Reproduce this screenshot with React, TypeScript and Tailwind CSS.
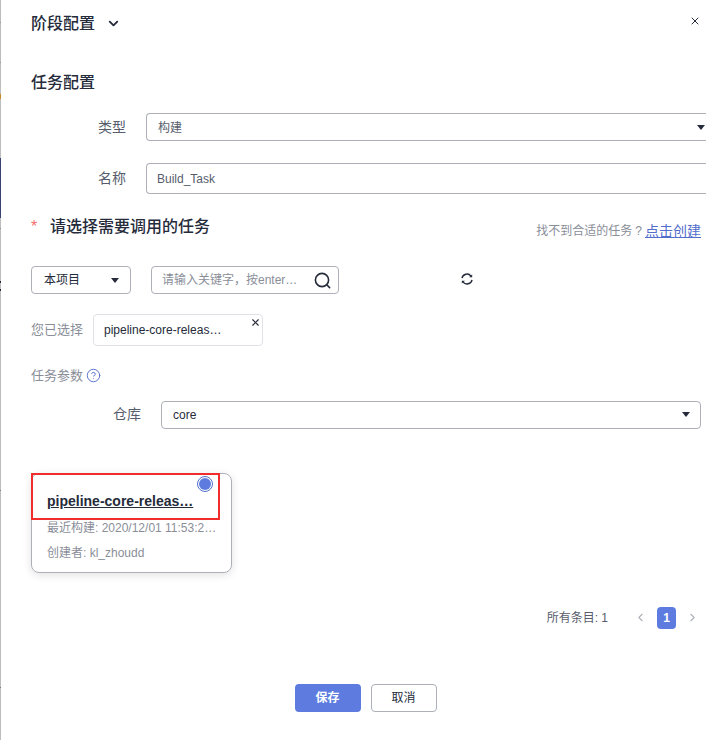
import { ChevronDown, X, ChevronLeft, ChevronRight, CircleHelp } from "lucide-react";

const Caret = () => <span className="w-0 h-0 border-x-[4.5px] border-x-transparent border-t-[5px] border-t-[#252b3a]" />;

const SearchIcon = () => (
  <svg width="17" height="17" viewBox="0 0 17 17" fill="none" stroke="#252b3a" strokeWidth="1.6">
    <circle cx="8" cy="8" r="6.6" />
    <path d="M12.8 12.8 15.6 15.6" strokeLinecap="round" />
  </svg>
);

const RefreshIcon = () => (
  <svg width="12" height="12" viewBox="0 0 12 12" fill="none" stroke="#252b3a" strokeWidth="1.4" className="ml-[122px] mb-[2px]">
    <path d="M1 5.2A5 5 0 0 1 10 3.2" />
    <path d="M11 6.8A5 5 0 0 1 2 8.8" />
    <path d="M8 4.2h3.2V1.4z" fill="#252b3a" stroke="none" />
    <path d="M4 7.8H0.8v2.8z" fill="#252b3a" stroke="none" />
  </svg>
);

export default function App() {
  return (
    <div className="w-[706px] h-[740px] overflow-hidden bg-white flex text-[12px] text-[#252b3a] font-['Liberation_Sans','Noto_Sans_CJK_SC',sans-serif]">
      <div className="w-px shrink-0 flex flex-col bg-[#bdbdbd]">
        <div className="h-[22px]" />
        <div className="h-px bg-[#999999]" />
        <div className="h-[39px]" />
        <div className="h-px bg-[#999999]" />
        <div className="h-[31px]" />
        <div className="h-[5px] bg-[#c98a2e]" />
        <div className="h-[59px]" />
        <div className="h-[60px] bg-[#3b4370]" />
        <div className="h-[10px]" />
        <div className="h-px bg-[#8f8f8f]" />
        <div className="h-[52px]" />
        <div className="h-[2px] bg-[#252b3a]" />
        <div className="h-[6px]" />
        <div className="h-[2px] bg-[#252b3a]" />
        <div className="h-[199px]" />
        <div className="h-px bg-[#7f7f7f]" />
        <div className="h-[196px]" />
        <div className="h-px bg-[#7f7f7f]" />
      </div>
      <div className="flex-1 min-w-0 flex flex-col pl-[30px]">
        <div className="h-[46px] flex items-center justify-between">
          <div className="flex items-center gap-[11px] text-[16px] font-medium pt-px">
            <span>阶段配置</span>
            <ChevronDown size={15} strokeWidth={3} />
          </div>
          <X size={12} strokeWidth={2} className="mr-[5px] mb-[5px]" />
        </div>
        <div className="mt-[26px] h-[22px] leading-[22px] text-[16px] font-medium">任务配置</div>
        <div className="mt-[19px] flex items-center">
          <span className="w-[95px] text-right text-[14px] text-[#575d6c] pt-px">类型</span>
          <div className="ml-[20px] flex-1 h-[28px] border border-r-0 border-[#adb0b8] rounded-l-sm flex items-center justify-between pl-[11px] pr-px text-[#575d6c]">
            <span className="pt-[2px]">构建</span><Caret />
          </div>
        </div>
        <div className="mt-[22px] flex items-center">
          <span className="w-[95px] text-right text-[14px] text-[#575d6c]">名称</span>
          <div className="ml-[20px] flex-1 h-[31px] border border-r-0 border-[#adb0b8] rounded-l-sm flex items-center pl-[10px] text-[#575d6c]">Build_Task</div>
        </div>
        <div className="mt-[20px] h-[26px] flex items-center justify-between pr-[5px]">
          <div className="flex items-center">
            <span className="text-[#f66f6a] text-[16px] w-[20px]">*</span>
            <span className="text-[16px] font-medium -ml-px">请选择需要调用的任务</span>
          </div>
          <div className="flex items-center text-[#8a8e99] pt-[8px]">
            <span>找不到合适的任务</span>
            <span className="mx-[3px]">?</span>
            <span className="text-[14px] text-[#526ecc] underline">点击创建</span>
          </div>
        </div>
        <div className="mt-[26px] flex items-center">
          <div className="w-[100px] h-[28px] border border-[#adb0b8] rounded-sm flex items-center justify-between pl-[12px] pr-[11px]">
            <span>本项目</span><Caret />
          </div>
          <div className="ml-[20px] w-[188px] h-[28px] border border-[#adb0b8] rounded-sm flex items-center justify-between pl-[10px] pr-[7px]">
            <span className="text-[#8a8e99]">请输入关键字，按enter…</span>
            <SearchIcon />
          </div>
          <RefreshIcon />
        </div>
        <div className="mt-[20px] flex items-center">
          <span className="w-[62px] text-[13px] text-[#8a8e99]">您已选择</span>
          <div className="relative w-[170px] h-[32px] border border-[#dfe1e6] rounded-[4px] flex items-center pl-[10px]">
            pipeline-core-releas…
            <X size={11} strokeWidth={2.5} className="absolute right-px top-[2px]" />
          </div>
        </div>
        <div className="mt-[20px] flex items-center gap-[3px] text-[13px] text-[#8a8e99]">
          <span>任务参数</span>
          <CircleHelp size={15} strokeWidth={1.5} className="text-[#526ecc]" />
        </div>
        <div className="mt-[15px] flex items-center pr-[5px]">
          <span className="w-[110px] text-right text-[14px] text-[#575d6c]">仓库</span>
          <div className="ml-[20px] flex-1 h-[28px] border border-[#adb0b8] rounded-sm flex items-center justify-between pl-[11px] pr-[10px]">
            <span>core</span><Caret />
          </div>
        </div>
        <div className="relative mt-[44px] w-[201px] h-[100px] border border-[#adb0b8] rounded-lg shadow-[0_2px_8px_rgba(0,0,0,0.12)] pl-[15px] pt-[18px]">
          <div className="absolute -left-px -top-px w-[189px] h-[47px] border-2 border-[#f12c2c]" />
          <div className="absolute right-[18px] top-[2px] w-[16px] h-[16px] rounded-full border border-[#526ecc] flex items-center justify-center">
            <span className="w-[12px] h-[12px] rounded-full bg-[#5e7ce0]" />
          </div>
          <div className="text-[14px] font-bold underline leading-[18px]">pipeline-core-releas…</div>
          <div className="mt-[9px] text-[#8a8e99] whitespace-nowrap">最近构建: 2020/12/01 11:53:2…</div>
          <div className="mt-[7px] text-[#8a8e99]">创建者: kl_zhoudd</div>
        </div>
        <div className="mt-[34px] flex items-center justify-end pr-[7px] text-[#575d6c]">
          <span>所有条目: 1</span>
          <ChevronLeft size={13} strokeWidth={2} className="ml-[26px] text-[#adb0b8]" />
          <span className="ml-[10px] w-[19px] h-[22px] rounded-sm bg-[#5e7ce0] text-white font-bold flex items-center justify-center">1</span>
          <ChevronRight size={13} strokeWidth={2} className="ml-[10px] text-[#adb0b8]" />
        </div>
        <div className="mt-[55px] flex justify-center gap-[10px] pr-[6px]">
          <div className="w-[66px] h-[28px] rounded-sm bg-[#5e7ce0] text-white font-bold flex items-center justify-center">保存</div>
          <div className="w-[66px] h-[28px] rounded-sm border border-[#adb0b8] flex items-center justify-center">取消</div>
        </div>
      </div>
    </div>
  );
}
